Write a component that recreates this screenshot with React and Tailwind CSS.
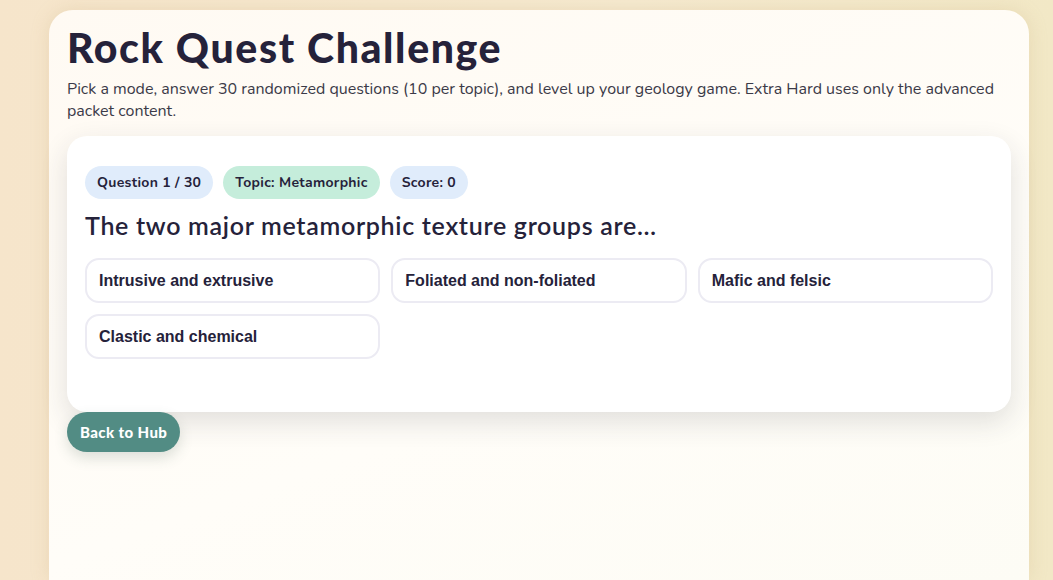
import React from 'react';

const options = [
  'Intrusive and extrusive',
  'Foliated and non-foliated',
  'Mafic and felsic',
  'Clastic and chemical',
];

const headFont = "font-['Lato','Open_Sans',sans-serif]";
const bodyFont = "font-['Nunito','Lato','Open_Sans',sans-serif]";

const Chip = ({ children, green }) => (
  <span
    className={`h-[33px] px-[12px] flex items-center rounded-full text-[14px] tracking-[0.3px] font-bold text-[#25223a] ${
      green ? 'bg-[#c5eddb]' : 'bg-[#e0ecfb]'
    }`}
  >
    {children}
  </span>
);

const App = () => {
  return (
    <div className="h-[580px] overflow-hidden bg-[linear-gradient(90deg,#f6e5cb_0%,#f6ead0_60%,#f2e8c6_100%)] px-[49px] pt-[10px]">
      <div
        className={`w-[980px] h-[570px] rounded-t-[24px] bg-[linear-gradient(160deg,#fffaf3_0%,#fffdf8_60%,#fdfcf5_100%)] shadow-[0_0_18px_rgba(200,170,120,0.25)] px-[18px] pt-[14px] ${bodyFont}`}
      >
        <h1 className={`${headFont} text-[41px] leading-[48px] font-black text-[#25223a] tracking-[1.6px]`}>
          Rock Quest Challenge
        </h1>
        <p className="mt-[6px] text-[16px] leading-[22px] text-[#3b3a48] pr-[8px]">
          Pick a mode, answer 30 randomized questions (10 per topic), and level up your geology game. Extra Hard uses only the advanced packet content.
        </p>

        <div className="mt-[14px] bg-white rounded-[20px] shadow-[0_10px_28px_rgba(40,40,60,0.14)] px-[18px] pt-[30px] pb-[53px]">
          <div className="flex gap-[10px]">
            <Chip>Question 1 / 30</Chip>
            <Chip green>Topic: Metamorphic</Chip>
            <Chip>Score: 0</Chip>
          </div>

          <h2 className={`${headFont} mt-[10px] text-[25px] leading-[32px] font-semibold tracking-[0.7px] text-[#25223a]`}>
            The two major metamorphic texture groups are…
          </h2>

          <div className="mt-[17px] grid grid-cols-3 gap-[11px]">
            {options.map((opt) => (
              <button
                key={opt}
                className="h-[45px] text-left px-[12px] rounded-[14px] border-2 border-[#ecebf3] bg-white font-['Liberation_Sans',Arial,sans-serif] text-[16px] font-bold text-[#25223a]"
              >
                {opt}
              </button>
            ))}
          </div>
        </div>

        <button
          className={`${headFont} h-[40px] px-[13px] rounded-full bg-[#528c84] text-white text-[15px] tracking-[0.4px] font-black shadow-[0_6px_14px_rgba(60,90,80,0.18)]`}
        >
          Back to Hub
        </button>
      </div>
    </div>
  );
};

export default App;
